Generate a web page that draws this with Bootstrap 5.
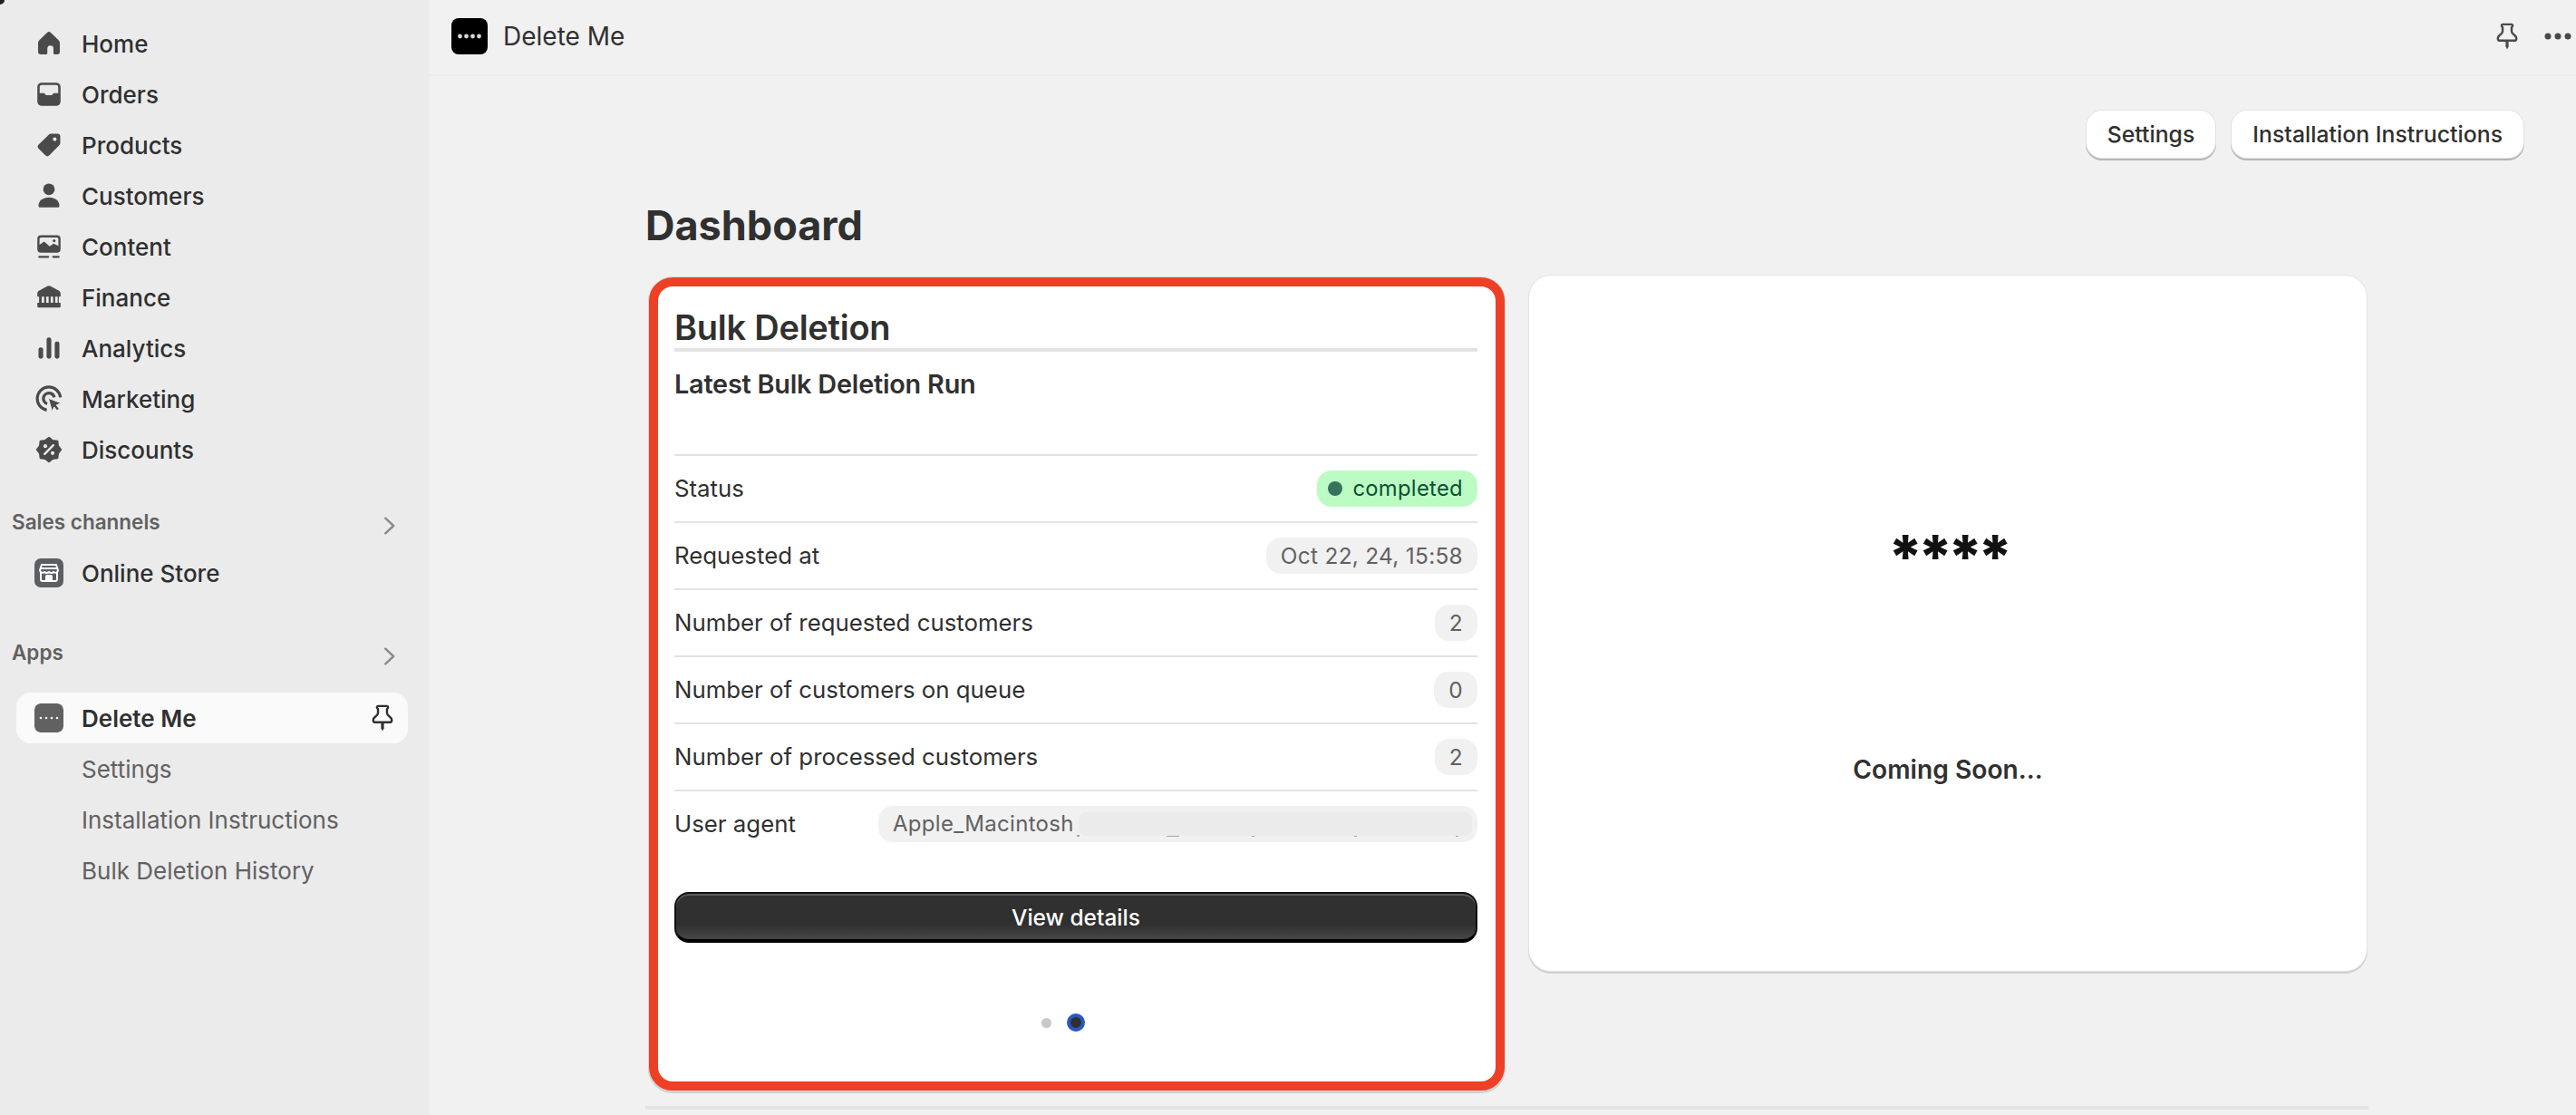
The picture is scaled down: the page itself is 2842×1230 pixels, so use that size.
<!doctype html>
<html lang="en"><head><meta charset="utf-8"><title>Delete Me</title>
<link href="https://cdn.jsdelivr.net/npm/bootstrap@5.3.0/dist/css/bootstrap.min.css" rel="stylesheet">
<style>
html,body{height:1230px;overflow:hidden}
body{font-family:Inter,"Liberation Sans",sans-serif;background:#f1f1f1;color:#303030;font-size:24px}
.side-rail{width:474px;height:1230px;background:#ebebeb;padding-top:20px;flex:none}
.rail-item{height:56px;padding-left:38px;gap:20px;color:#303030;font-weight:500;text-decoration:none;font-size:26px}
.rail-item svg{width:32px;height:32px;flex:none;fill:#4a4a4a}
.rail-label{height:56px;padding:0 0 0 13px;margin-top:24px;color:#616161;font-weight:600;font-size:22.5px}
.rail-apps{margin-top:32px}
.rail-label svg{width:32px;height:32px;margin:8px 28px 0 0;fill:none;stroke:#8a8a8a;stroke-width:1.5;stroke-linecap:round;stroke-linejoin:round}
.rail-sub{height:56px;padding-left:90px;color:#616161;font-weight:400;text-decoration:none;font-size:26px}
.rail-active{background:#fafafa;border-radius:16px;margin:16px 24px 0 18px;padding:0 12px 0 20px;height:56px;gap:20px;font-weight:600;color:#303030;font-size:26px}
.app-tile{width:32px;height:32px;border-radius:7px;flex:none}
.main-pane{min-width:0;height:1230px}
.top-strip{height:84px;border-bottom:2px solid #ebebeb;padding:0 0 2px 24px;gap:17px}
.top-strip .app-name{font-size:28px;font-weight:400}
.strip-tools{margin-left:auto;gap:24px;padding-right:2px}
.action-row{padding:38px 58px 0 0;gap:18px}
.action-btn{height:52px;background:#fff;border:0;border-radius:17px;font-size:24.800px;font-weight:500;color:#303030;padding:1px 23px 0;box-shadow:0 0 0 1px #e3e3e3,0 2px 0 1px #b5b5b5}
.page-wrap{padding-left:238px;width:2140px}
.page-title{font-size:45px;font-weight:700;line-height:54px;margin:48px 0 28px;color:#303030}
.tile-grid{display:grid;grid-template-columns:948px 924px;gap:27px;align-items:start}
.red-tile{margin:2px 0 0 4px;border:10px solid #ee4026;border-radius:26px;background:#fff;box-shadow:0 0 0 1px #d8d8d8,0 2px 0 1px #cfcfcf;padding:22px 20px 55px 18px}
.tile-head{font-size:38px;font-weight:600;line-height:46px;letter-spacing:-.25px;color:#303030;border-bottom:4px solid #e3e3e3;height:50px;margin:0}
.tile-sub{font-size:28.800px;font-weight:600;line-height:32px;margin:20px 0 61px;letter-spacing:-.2px}
.info-row{height:74px;border-top:2px solid #e3e3e3;font-size:25.800px;font-weight:400}
.soft-pill{background:#f1f1f1;color:#616161;border-radius:16px;height:40px;padding:0 16px;font-size:24.400px;font-weight:400;letter-spacing:.3px}
.green-pill{background:#bcfcc4;color:#0c5132;padding-left:12px;gap:11px;font-size:23.800px}
.green-pill i{display:block;width:16px;height:16px;border-radius:50%;background:#35745b}
.agent-pill{width:661px;position:relative;justify-content:flex-start;overflow:hidden;font-size:24px}
.agent-mask{position:absolute;left:221px;right:6px;top:7px;height:26px;background:#ebebeb;border-radius:8px}
.agent-tick{position:absolute;top:32px;height:2px;width:3px;background:#a8a8a8}
.tick-a{left:219px;width:3px}
.tick-b{left:318px;width:14px}
.tick-c{left:412px}
.tick-d{left:525px}
.tick-e{left:637px}
.dark-btn{height:56px;width:100%;margin-top:39px;border-radius:16px;border:2px solid #111;border-bottom:4px solid #000;background:linear-gradient(#303030 68%,#474747);box-shadow:inset 0 2px 0 #5d5d5d;color:#fff;font-size:24.500px;font-weight:500;display:block;padding:2px 0 0}
.pager{height:20px;margin-top:78px;gap:16.500px;transform:translateX(-14px)}
.pager i{display:block;border-radius:50%}
.pager .pg-off{width:11px;height:11px;background:#c8c8c8}
.pager .pg-on{width:20px;height:20px;background:#303030;border:4px solid #2858c4}
.plain-tile{height:767px;background:#fff;border-radius:24px;box-shadow:0 0 0 1px #e3e3e3,0 2px 0 1px #cfcfcf;position:relative;border:0;padding-top:274px}
.star-line{font-size:66px;font-weight:800;line-height:72px;color:#111;text-align:center;letter-spacing:-5.500px;height:72px}
.soon-line{font-size:28.200px;font-weight:600;line-height:34px;text-align:center;margin-top:182px;color:#303030}
.foot-rule{height:4px;background:#e3e3e3;margin-top:17px;width:1901px}
.corner-nub{position:absolute;left:0;top:0;width:5px;height:5px;background:#222;border-bottom-right-radius:100%}
</style></head>
<body class="d-flex position-relative">
<i class="corner-nub"></i>
<nav class="side-rail d-flex flex-column">
<a class="rail-item d-flex align-items-center" href="#"><svg viewBox="0 0 20 20"><path d="M8.600 2.600a2 2 0 0 1 2.800 0l5.200 5a3 3 0 0 1 .9 2.100v6.300a1.500 1.500 0 0 1-1.500 1.500h-1.900a1 1 0 0 1-1-1v-3a2.100 2.100 0 0 0-4.200 0v3a1 1 0 0 1-1 1H4a1.500 1.500 0 0 1-1.500-1.500V9.700a3 3 0 0 1 .9-2.100z"/></svg>Home</a>
<a class="rail-item d-flex align-items-center" href="#"><svg viewBox="0 0 20 20"><path fill-rule="evenodd" d="M5 2h10a3 3 0 0 1 3 3v10a3 3 0 0 1-3 3H5a3 3 0 0 1-3-3V5a3 3 0 0 1 3-3zm0 1.600A1.400 1.400 0 0 0 3.600 5v4.200h3.200L8 10.600h4l1.200-1.400h3.200V5A1.400 1.400 0 0 0 15 3.600z"/></svg>Orders</a>
<a class="rail-item d-flex align-items-center" href="#"><svg viewBox="0 0 20 20"><path fill-rule="evenodd" d="M11.600 2.200h4.200a2 2 0 0 1 2 2v4.200a2.500 2.500 0 0 1-.7 1.800l-6.800 6.900a2 2 0 0 1-2.800 0l-4.600-4.600a2 2 0 0 1 0-2.800l6.900-6.800a2.500 2.500 0 0 1 1.800-.7zm2.400 2.500a1.300 1.300 0 1 0 0 2.600 1.300 1.300 0 0 0 0-2.600z"/></svg>Products</a>
<a class="rail-item d-flex align-items-center" href="#"><svg viewBox="0 0 20 20"><circle cx="10" cy="5.500" r="4"/><path d="M2.800 16.800c0-3.400 3.200-5.700 7.200-5.700s7.200 2.300 7.200 5.700c0 .7-.5 1.200-1.200 1.200H4c-.7 0-1.200-.5-1.200-1.200z"/></svg>Customers</a>
<a class="rail-item d-flex align-items-center" href="#"><svg viewBox="0 0 20 20"><path fill-rule="evenodd" d="M4.500 2.200h11A2.500 2.500 0 0 1 18 4.700v7a2.500 2.500 0 0 1-2.500 2.500h-11A2.500 2.500 0 0 1 2 11.700v-7a2.500 2.500 0 0 1 2.500-2.500zm-1 2.500v4l3.200-2.100 3.800 3.200 2.700-1.800 3.300 1.600V4.700a1 1 0 0 0-1-1h-11a1 1 0 0 0-1 1z"/><circle cx="13.600" cy="6" r="1"/><rect x="2.600" y="16.400" width="7.600" height="1.400" rx=".7"/><rect x="12.200" y="16.400" width="5.200" height="1.400" rx=".7"/></svg>Content</a>
<a class="rail-item d-flex align-items-center" href="#"><svg viewBox="0 0 20 20"><path fill-rule="evenodd" d="M8.800 2.300a2.400 2.400 0 0 1 2.400 0l5.700 3.100c.7.400 1.100 1 1.100 1.700v2.400h-1.200v4.300H18v2.400c0 .5-.4.900-.9.900H2.900a.9.900 0 0 1-.9-.9v-2.400h1.200V9.500H2V7.100c0-.7.400-1.300 1.100-1.700zM5 9.500v4.300h1.700V9.500zm3.100 0v4.300h1.700V9.500zm3.100 0v4.300h1.700V9.500zm3.100 0v4.300H16V9.500z"/></svg>Finance</a>
<a class="rail-item d-flex align-items-center" href="#"><svg viewBox="0 0 20 20"><rect x="2.800" y="9.500" width="3.200" height="7.800" rx="1.500"/><rect x="8.400" y="2.700" width="3.200" height="14.600" rx="1.500"/><rect x="14" y="5.500" width="3.200" height="11.800" rx="1.500"/></svg>Analytics</a>
<a class="rail-item d-flex align-items-center" href="#"><svg viewBox="0 0 20 20"><path d="M8.500 17.700A8 8 0 1 1 17.900 9" fill="none" stroke="#4a4a4a" stroke-width="2"/><path d="M8.800 13.400A3.800 3.800 0 1 1 13.700 9" fill="none" stroke="#4a4a4a" stroke-width="2"/><path d="M9.600 9.600l8.800 3.300-3.300 1.400 2 2.500-1.500 1.300-2-2.500-1.400 3z" stroke="#ebebeb" stroke-width=".6"/></svg>Marketing</a>
<a class="rail-item d-flex align-items-center" href="#"><svg viewBox="0 0 20 20"><path stroke="#4a4a4a" stroke-width="1.200" stroke-linejoin="round" d="M10 1.700l2.600 2 3.270.43.41 3.270 2 2.600-2 2.600-.41 3.270-3.270.41-2.600 2-2.600-2-3.270-.41-.41-3.270-2-2.600 2-2.600.41-3.270 3.270-.43z"/><path d="M7 13l6-6" stroke="#ebebeb" stroke-width="1.500" stroke-linecap="round"/><circle cx="7.500" cy="7.600" r="1.300" fill="#ebebeb"/><circle cx="12.500" cy="12.400" r="1.300" fill="#ebebeb"/></svg>Discounts</a>

<div class="rail-label d-flex align-items-center justify-content-between">Sales channels<svg viewBox="0 0 20 20"><path d="M7 4.800l5.600 5.200-5.600 5.200"/></svg></div>
<a class="rail-item d-flex align-items-center" href="#"><svg viewBox="0 0 32 32"><rect width="32" height="32" rx="7" fill="#5c5f62"/><g fill="none" stroke="#fff" stroke-width="2"><path d="M7 15v8a2 2 0 0 0 2 2h14a2 2 0 0 0 2-2v-8"/><path d="M8 7h16l2 6a3 3 0 0 1-5 2 4 4 0 0 1-5 0 4 4 0 0 1-5 0 3 3 0 0 1-5-2z"/><path d="M6.500 11h19"/></g><path d="M12 25v-5a2 2 0 0 1 2-2h4a2 2 0 0 1 2 2v5z" fill="#fff"/></svg><span>Online Store</span></a>

<div class="rail-label rail-apps d-flex align-items-center justify-content-between">Apps<svg viewBox="0 0 20 20"><path d="M7 4.800l5.600 5.200-5.600 5.200"/></svg></div>
<div class="rail-active d-flex align-items-center">
<svg class="app-tile" viewBox="0 0 32 32"><rect width="32" height="32" rx="6" fill="#616161"/><g fill="#fff"><circle cx="7" cy="16" r="1.300"/><circle cx="13" cy="16" r="1.300"/><circle cx="19" cy="16" r="1.300"/><circle cx="25" cy="16" r="1.300"/></g></svg>
<span class="flex-grow-1">Delete Me</span>
<svg width="32" height="32" viewBox="0 0 20 20"><path fill="none" stroke="#303030" stroke-width="1.500" stroke-linejoin="round" d="M7 1.800h6a.9.900 0 0 1 .5 1.600l-.4.300v2.800c0 1 .5 1.600 1.800 2.600.9.700 1.500 1.400 1.500 2.400 0 .9-.6 1.500-1.500 1.500H5.100c-.9 0-1.500-.6-1.500-1.500 0-1 .6-1.700 1.500-2.400C6.400 8.100 6.900 7.500 6.900 6.500V3.700l-.4-.3A.9.900 0 0 1 7 1.800z"/><path fill="#303030" d="M9 13.500h2v3.600l-1 1.900-1-1.900z"/></svg>
</div>
<a class="rail-sub d-flex align-items-center" href="#">Settings</a>
<a class="rail-sub d-flex align-items-center" href="#">Installation Instructions</a>
<a class="rail-sub d-flex align-items-center" href="#">Bulk Deletion History</a>
</nav>

<main class="main-pane flex-grow-1">
<header class="top-strip d-flex align-items-center">
<svg width="40" height="40" viewBox="0 0 40 40"><rect width="40" height="40" rx="8" fill="#000"/><g fill="#d8d8d8"><circle cx="9.500" cy="20" r="2.400"/><circle cx="16.500" cy="20" r="2.400"/><circle cx="23.500" cy="20" r="2.400"/><circle cx="30.500" cy="20" r="2.400"/></g></svg>
<span class="app-name">Delete Me</span>
<div class="strip-tools d-flex align-items-center">
<svg width="32" height="32" viewBox="0 0 20 20"><path fill="none" stroke="#4a4a4a" stroke-width="1.500" stroke-linejoin="round" d="M7 1.800h6a.9.900 0 0 1 .5 1.600l-.4.300v2.800c0 1 .5 1.600 1.800 2.600.9.700 1.500 1.400 1.500 2.400 0 .9-.6 1.500-1.500 1.500H5.100c-.9 0-1.500-.6-1.500-1.500 0-1 .6-1.700 1.500-2.400C6.400 8.100 6.900 7.500 6.900 6.500V3.700l-.4-.3A.9.900 0 0 1 7 1.800z"/><path fill="#4a4a4a" d="M9 13.500h2v3.600l-1 1.900-1-1.900z"/></svg>
<svg width="34" height="10" viewBox="0 0 34 10"><g fill="#4a4a4a"><circle cx="5" cy="5" r="3.500"/><circle cx="16" cy="5" r="3.500"/><circle cx="27" cy="5" r="3.500"/></g></svg>
</div>
</header>
<div class="action-row d-flex justify-content-end">
<button type="button" class="btn action-btn">Settings</button>
<button type="button" class="btn action-btn">Installation Instructions</button>
</div>
<div class="page-wrap">
<h1 class="page-title">Dashboard</h1>
<div class="tile-grid">
<section class="card red-tile">
<h2 class="tile-head">Bulk Deletion</h2>
<p class="tile-sub">Latest Bulk Deletion Run</p>
<div class="info-row d-flex align-items-center justify-content-between"><span>Status</span><span class="soft-pill green-pill d-flex align-items-center"><i></i>completed</span></div>
<div class="info-row d-flex align-items-center justify-content-between"><span>Requested at</span><span class="soft-pill d-flex align-items-center">Oct 22, 24, 15:58</span></div>
<div class="info-row d-flex align-items-center justify-content-between"><span>Number of requested customers</span><span class="soft-pill d-flex align-items-center">2</span></div>
<div class="info-row d-flex align-items-center justify-content-between"><span>Number of customers on queue</span><span class="soft-pill d-flex align-items-center">0</span></div>
<div class="info-row d-flex align-items-center justify-content-between"><span>Number of processed customers</span><span class="soft-pill d-flex align-items-center">2</span></div>
<div class="info-row d-flex align-items-center justify-content-between"><span>User agent</span><span class="soft-pill agent-pill d-flex align-items-center"><span>Apple_Macintosh</span><i class="agent-tick tick-a"></i><i class="agent-tick tick-b"></i><i class="agent-tick tick-c"></i><i class="agent-tick tick-d"></i><i class="agent-tick tick-e"></i><span class="agent-mask"></span></span></div>
<button type="button" class="btn dark-btn">View details</button>
<div class="pager d-flex align-items-center justify-content-center"><i class="pg-off"></i><i class="pg-on"></i></div>
</section>
<section class="card plain-tile">
<div class="star-line">****</div>
<div class="soon-line">Coming Soon...</div>
</section>
</div>
<div class="foot-rule"></div>
</div>
</main>
<script src="https://cdn.jsdelivr.net/npm/bootstrap@5.3.0/dist/js/bootstrap.bundle.min.js"></script>
</body></html>
